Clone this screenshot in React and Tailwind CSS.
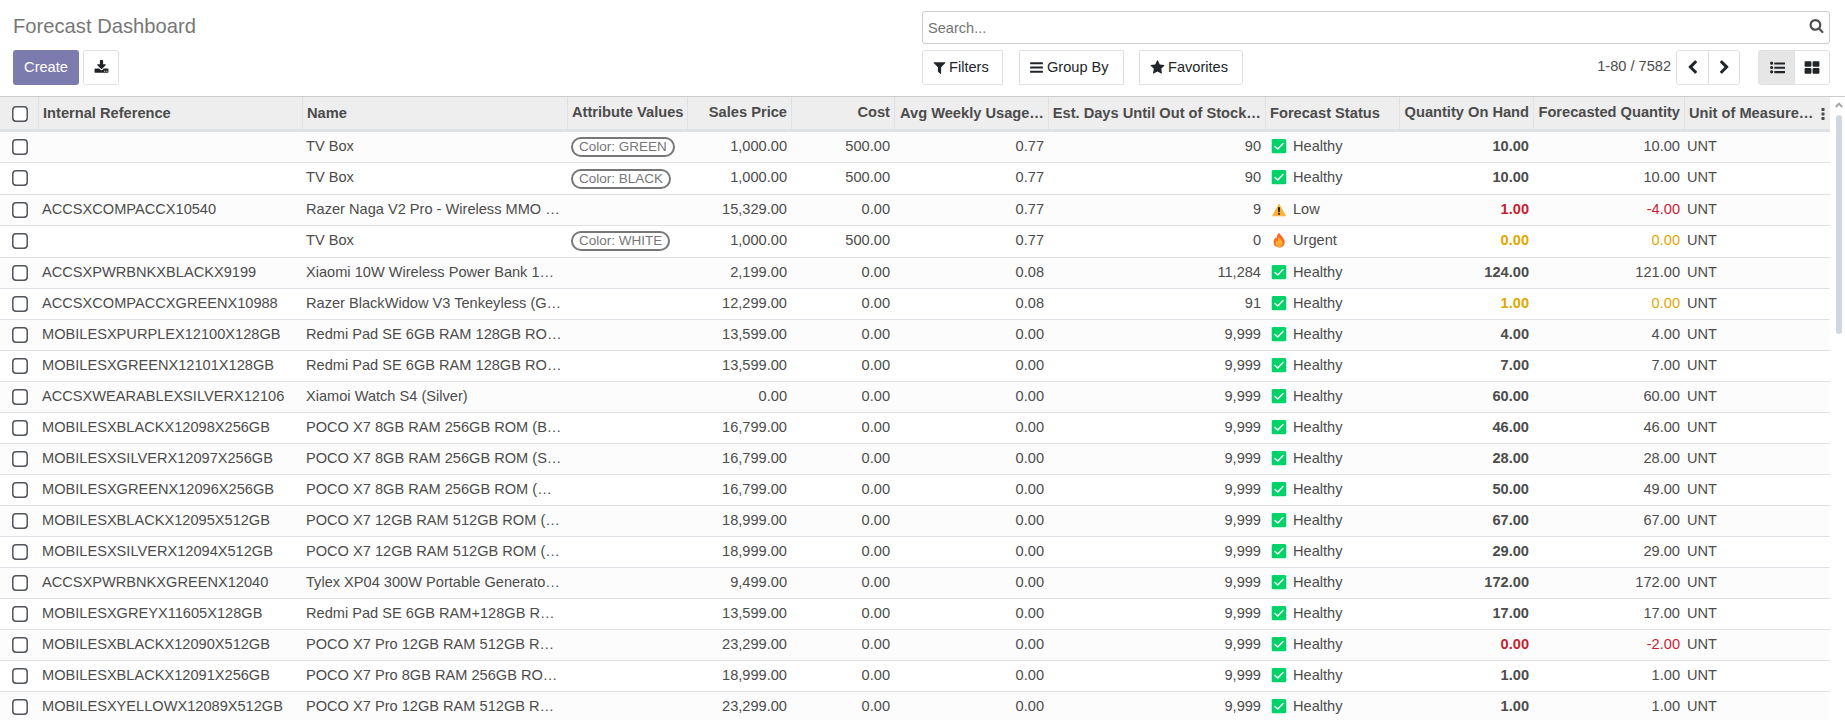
const GRID =
  'grid w-[1830px] grid-cols-[38px_264px_265px_120px_104px_103px_154px_217px_134px_134px_151px_146px]';

const ROWS = [
  ['', 'TV Box', 'GREEN', '1,000.00', '500.00', '0.77', '90', 'Healthy', '10.00', '10.00'],
  ['', 'TV Box', 'BLACK', '1,000.00', '500.00', '0.77', '90', 'Healthy', '10.00', '10.00'],
  ['ACCSXCOMPACCX10540', 'Razer Naga V2 Pro - Wireless MMO …', '', '15,329.00', '0.00', '0.77', '9', 'Low', '1.00', '-4.00', 'danger'],
  ['', 'TV Box', 'WHITE', '1,000.00', '500.00', '0.77', '0', 'Urgent', '0.00', '0.00', 'warning'],
  ['ACCSXPWRBNKXBLACKX9199', 'Xiaomi 10W Wireless Power Bank 1…', '', '2,199.00', '0.00', '0.08', '11,284', 'Healthy', '124.00', '121.00'],
  ['ACCSXCOMPACCXGREENX10988', 'Razer BlackWidow V3 Tenkeyless (G…', '', '12,299.00', '0.00', '0.08', '91', 'Healthy', '1.00', '0.00', 'warning'],
  ['MOBILESXPURPLEX12100X128GB', 'Redmi Pad SE 6GB RAM 128GB RO…', '', '13,599.00', '0.00', '0.00', '9,999', 'Healthy', '4.00', '4.00'],
  ['MOBILESXGREENX12101X128GB', 'Redmi Pad SE 6GB RAM 128GB RO…', '', '13,599.00', '0.00', '0.00', '9,999', 'Healthy', '7.00', '7.00'],
  ['ACCSXWEARABLEXSILVERX12106', 'Xiamoi Watch S4 (Silver)', '', '0.00', '0.00', '0.00', '9,999', 'Healthy', '60.00', '60.00'],
  ['MOBILESXBLACKX12098X256GB', 'POCO X7 8GB RAM 256GB ROM (B…', '', '16,799.00', '0.00', '0.00', '9,999', 'Healthy', '46.00', '46.00'],
  ['MOBILESXSILVERX12097X256GB', 'POCO X7 8GB RAM 256GB ROM (S…', '', '16,799.00', '0.00', '0.00', '9,999', 'Healthy', '28.00', '28.00'],
  ['MOBILESXGREENX12096X256GB', 'POCO X7 8GB RAM 256GB ROM (…', '', '16,799.00', '0.00', '0.00', '9,999', 'Healthy', '50.00', '49.00'],
  ['MOBILESXBLACKX12095X512GB', 'POCO X7 12GB RAM 512GB ROM (…', '', '18,999.00', '0.00', '0.00', '9,999', 'Healthy', '67.00', '67.00'],
  ['MOBILESXSILVERX12094X512GB', 'POCO X7 12GB RAM 512GB ROM (…', '', '18,999.00', '0.00', '0.00', '9,999', 'Healthy', '29.00', '29.00'],
  ['ACCSXPWRBNKXGREENX12040', 'Tylex XP04 300W Portable Generato…', '', '9,499.00', '0.00', '0.00', '9,999', 'Healthy', '172.00', '172.00'],
  ['MOBILESXGREYX11605X128GB', 'Redmi Pad SE 6GB RAM+128GB R…', '', '13,599.00', '0.00', '0.00', '9,999', 'Healthy', '17.00', '17.00'],
  ['MOBILESXBLACKX12090X512GB', 'POCO X7 Pro 12GB RAM 512GB R…', '', '23,299.00', '0.00', '0.00', '9,999', 'Healthy', '0.00', '-2.00', 'danger'],
  ['MOBILESXBLACKX12091X256GB', 'POCO X7 Pro 8GB RAM 256GB RO…', '', '18,999.00', '0.00', '0.00', '9,999', 'Healthy', '1.00', '1.00'],
  ['MOBILESXYELLOWX12089X512GB', 'POCO X7 Pro 12GB RAM 512GB R…', '', '23,299.00', '0.00', '0.00', '9,999', 'Healthy', '1.00', '1.00'],
];

const ICONS = {
  search:
    'M1216 832q0-185-131.5-316.5t-316.5-131.5-316.5 131.5-131.5 316.5 131.5 316.5 316.5 131.5 316.5-131.5 131.5-316.5zm512 832q0 52-38 90t-90 38q-54 0-90-38l-343-342q-179 124-399 124-143 0-273.5-55.5t-225-150-150-225-55.5-273.5 55.5-273.5 150-225 225-150 273.5-55.5 273.5 55.5 225 150 150 225 55.5 273.5q0 220-124 399l343 343q37 37 37 90z',
  star:
    'M1728 647q0 22-26 48l-363 354 86 500q1 7 1 20 0 21-10.5 35.5t-30.5 14.5q-19 0-40-12l-449-236-449 236q-22 12-40 12-21 0-31.5-14.5t-10.5-35.5q0-6 2-20l86-500-364-354q-25-27-25-48 0-37 56-46l502-73 225-455q19-41 49-41t49 41l225 455 502 73q56 9 56 46z',
  filter:
    'M1595 295q17 41-14 70l-493 493v742q0 42-39 59-13 5-25 5-27 0-45-19l-256-256q-19-19-19-45v-486l-493-493q-31-29-14-70 17-39 59-39h1280q42 0 59 39z',
  bars:
    'M192 1280h1408q64 0 64 64v128q0 64-64 64h-1408q-64 0-64-64v-128q0-64 64-64zM192 768h1408q64 0 64 64v128q0 64-64 64h-1408q-64 0-64-64v-128q0-64 64-64zM192 256h1408q64 0 64 64v128q0 64-64 64h-1408q-64 0-64-64v-128q0-64 64-64z',
  download:
    'M1344 1344q0-26-19-45t-45-19-45 19-19 45 19 45 45 19 45-19 19-45zm256 0q0-26-19-45t-45-19-45 19-19 45 19 45 45 19 45-19 19-45zm128-224v320q0 40-28 68t-68 28h-1472q-40 0-68-28t-28-68v-320q0-40 28-68t68-28h465l135 136q58 56 136 56t136-56l136-136h464q40 0 68 28t28 68zm-325-569q17 41-14 70l-448 448q-18 19-45 19t-45-19l-448-448q-31-29-14-70 17-39 59-39h256v-448q0-26 19-45t45-19h256q26 0 45 19t19 45v448h256q42 0 59 39z',
  left:
    'M1427 301l-531 531 531 531q19 19 19 45t-19 45l-166 166q-19 19-45 19t-45-19l-742-742q-19-19-19-45t19-45l742-742q19-19 45-19t45 19l166 166q19 19 19 45t-19 45z',
  right:
    'M1363 877l-742 742q-19 19-45 19t-45-19l-166-166q-19-19-19-45t19-45l531-531-531-531q-19-19-19-45t19-45l166-166q19-19 45-19t45 19l742 742q19 19 19 45t-19 45z',
  list:
    'M192 1216a192 192 0 1 1 0 384a192 192 0 1 1 0-384zM192 704a192 192 0 1 1 0 384a192 192 0 1 1 0-384zM192 192a192 192 0 1 1 0 384a192 192 0 1 1 0-384zM544 1312h1216q32 0 32 32v192q0 32-32 32h-1216q-32 0-32-32v-192q0-32 32-32zM544 800h1216q32 0 32 32v192q0 32-32 32h-1216q-32 0-32-32v-192q0-32 32-32zM544 288h1216q32 0 32 32v192q0 32-32 32h-1216q-32 0-32-32v-192q0-32 32-32z',
  large:
    'M832 1024v384q0 52-38 90t-90 38h-512q-52 0-90-38t-38-90v-384q0-52 38-90t90-38h512q52 0 90 38t38 90zm0-768v384q0 52-38 90t-90 38h-512q-52 0-90-38t-38-90v-384q0-52 38-90t90-38h512q52 0 90 38t38 90zm896 768v384q0 52-38 90t-90 38h-512q-52 0-90-38t-38-90v-384q0-52 38-90t90-38h512q52 0 90 38t38 90zm0-768v384q0 52-38 90t-90 38h-512q-52 0-90-38t-38-90v-384q0-52 38-90t90-38h512q52 0 90 38t38 90z',
};

function Icon({ name, className = 'size-[15px]' }) {
  return (
    <svg viewBox="0 0 1792 1792" fill="currentColor" className={`shrink-0 ${className}`}>
      <path d={ICONS[name]} />
    </svg>
  );
}

function StatusIcon({ status }) {
  if (status === 'Low')
    return (
      <svg viewBox="0 0 16 16" className="size-4 shrink-0">
        <path d="M8 3.200 14.400 14.800H1.600z" fill="#ffb02e" stroke="#ffb02e" strokeLinejoin="round" strokeWidth=".8" />
        <path d="M7.100 6.300h1.800l-.3 4.900H7.400z" fill="#000" />
        <circle cx="8" cy="12.900" r=".95" fill="#000" />
      </svg>
    );
  if (status === 'Urgent')
    return (
      <svg viewBox="0 0 16 16" className="size-4 shrink-0">
        <path d="M8.3.8c.5 2 2.2 2.700 3.500 4.700 1 1.500 1.900 3 1.900 4.900 0 3-2.400 5.100-5.600 5.100s-5.500-2.200-5.500-5.200c0-2.300 1-3.900 2-5.100.3.600.6 1.100 1.100 1.400C5.700 4.300 6.500 2 8.300.8z" fill="#ff6723" />
        <path d="M8.200 5.600c.4 1.600 3.600 3 3.600 6 0 2-1.500 3.500-3.700 3.500s-3.700-1.400-3.700-3.500c0-1.400.7-2.500 1.300-3.100.3.500.5.900.9 1.100.1-1.600.6-3 1.600-4z" fill="#ffb02e" />
      </svg>
    );
  return (
    <svg viewBox="0 0 16 16" className="size-4 shrink-0">
      <rect x=".7" y="1" width="14.500" height="14.300" rx="1.500" fill="#00d26a" />
      <path d="M4 8.400 6.800 11 12 5.500" fill="none" stroke="#fff" strokeWidth="1.400" strokeLinecap="round" />
    </svg>
  );
}

function Checkbox() {
  return (
    <svg viewBox="0 0 16 16" className="block size-4">
      <rect x=".8" y=".8" width="14.400" height="14.400" rx="3.200" fill="#fff" stroke="#50555c" strokeWidth="1.500" />
    </svg>
  );
}

function Th({ children, right, raised }) {
  return (
    <div className={`flex items-center overflow-hidden whitespace-nowrap border-l border-[#dee2e6] px-1 ${right ? 'justify-end' : ''} ${raised ? '' : 'pt-0.5'}`}>
      {children}
    </div>
  );
}

function Num({ children, className = '' }) {
  return <div className={`pr-1 text-right ${className}`}>{children}</div>;
}

const TONES = { danger: 'text-[#c81e32]', warning: 'text-[#e0a800]' };
const btn = 'flex h-[35px] items-center border border-[#dee2e6] bg-white text-[#212529]';

export default function App() {
  return (
    <div className="flex h-[720px] w-[1845px] flex-col overflow-hidden bg-white font-['Liberation_Sans',Arial,sans-serif] text-[14.6px] text-[#4c4c4c]">
      <header className="flex h-24 shrink-0 justify-between pl-[13px] pr-[15px]">
        <div className="flex flex-col">
          <h1 className="mt-[11px] h-[39px] text-[20.200px] leading-[30px] text-[#777]">Forecast Dashboard</h1>
          <div className="flex gap-1">
            <button className="h-[35px] w-[66px] rounded-[3px] bg-[#7c7bad] text-white">Create</button>
            <button className={`${btn} w-9 justify-center rounded-[3px]`}>
              <Icon name="download" />
            </button>
          </div>
        </div>
        <div className="flex w-[908px] flex-col pt-[11px]">
          <div className="flex h-[33px] items-center justify-between rounded-[3px] border border-[#ccc] px-[5px]">
            <span className="pt-0.5 text-[#757575]">Search...</span>
            <Icon name="search" className="mb-1 size-[15px]" />
          </div>
          <div className="mt-1.5 flex">
            <button className={`${btn} w-[81px] gap-0.5 rounded-l-[3px] pl-[9px]`}>
              <Icon name="filter" />
              Filters
            </button>
            <button className={`${btn} ml-4 w-[105px] gap-[3px] pl-[9px]`}>
              <Icon name="bars" />
              Group By
            </button>
            <button className={`${btn} ml-[15px] w-[104px] gap-[3px] rounded-r-[3px] pl-2.5`}>
              <Icon name="star" />
              Favorites
            </button>
            <span className="ml-auto mr-[5px] pt-[5px] leading-[22px]">1-80 / 7582</span>
            <button className={`${btn} w-[33px] justify-center rounded-l-[3px]`}>
              <Icon name="left" />
            </button>
            <button className={`${btn} -ml-px w-8 justify-center rounded-r-[3px]`}>
              <Icon name="right" />
            </button>
            <div className="ml-[18px] flex">
              <button className="flex h-[35px] w-[37px] items-center justify-center rounded-l-[3px] border border-[#dee2e6] bg-[#e6e6e6] pl-0.5 text-[#212529]">
                <Icon name="list" />
              </button>
              <button className={`${btn} -ml-px w-9 justify-center rounded-r-[3px]`}>
                <Icon name="large" className="size-4" />
              </button>
            </div>
          </div>
        </div>
      </header>

      <div className="flex min-h-0 flex-1 border-t border-[#ccc]">
        <main className="w-[1830px]">
          <div className={`${GRID} h-[35px] border-b-[3px] border-[#dee2e6] bg-[#eee] text-[14.650px] font-bold`}>
            <div className="pl-3 pt-[9px]">
              <Checkbox />
            </div>
            <Th>Internal Reference</Th>
            <Th>Name</Th>
            <Th raised>Attribute Values</Th>
            <Th right raised>Sales Price</Th>
            <Th right raised>Cost</Th>
            <Th right>Avg Weekly Usage…</Th>
            <Th right>Est. Days Until Out of Stock…</Th>
            <Th>Forecast Status</Th>
            <Th right raised>Quantity On Hand</Th>
            <Th right raised>Forecasted Quantity</Th>
            <Th>
              Unit of Measure…
              <svg viewBox="0 0 4 12" className="ml-2 h-3 w-1 shrink-0" fill="currentColor">
                <rect x=".5" y="0" width="3" height="3" />
                <rect x=".5" y="4.500" width="3" height="3" />
                <rect x=".5" y="9" width="3" height="3" />
              </svg>
            </Th>
          </div>
          {ROWS.map(([ref, name, color, price, cost, usage, days, status, hand, forecast, tone], i) => (
            <div
              key={i}
              className={`${GRID} border-b border-[#dee2e6] leading-[29px] ${i === 1 || i === 3 ? 'h-8' : 'h-[31px]'} ${i % 2 ? 'bg-white' : 'bg-[#fcfcfc]'}`}
            >
              <div className="pl-3 pt-[7px]">
                <Checkbox />
              </div>
              <div className="whitespace-nowrap pl-1">{ref}</div>
              <div className="whitespace-nowrap pl-1">{name}</div>
              <div className={`flex pl-1 ${i === 1 ? 'pt-1.5' : 'pt-[5px]'}`}>
                {color && (
                  <span className="h-5 whitespace-nowrap rounded-full border-2 border-[#777] bg-white px-1.5 text-[13.500px] leading-4 text-[#777]">
                    Color: {color}
                  </span>
                )}
              </div>
              <Num>{price}</Num>
              <Num>{cost}</Num>
              <Num>{usage}</Num>
              <Num>{days}</Num>
              <div className="flex gap-1.5 pl-1.5">
                <span className="pt-1.5">
                  <StatusIcon status={status} />
                </span>
                {status}
              </div>
              <Num className={`font-bold ${TONES[tone] || ''}`}>{hand}</Num>
              <Num className={TONES[tone] || ''}>{forecast}</Num>
              <div className="pl-[3px]">UNT</div>
            </div>
          ))}
        </main>
        <div className="flex w-[15px] flex-col items-center pl-0.5 pt-[5px]">
          <svg viewBox="0 0 8 6" className="h-1.5 w-2" fill="none" stroke="#a8a8a8" strokeWidth="2">
            <path d="M.8 5 4 1.600 7.200 5" />
          </svg>
          <div className="mt-[7px] h-[219px] w-1.5 rounded-full bg-[#cfd8e1]" />
        </div>
      </div>
    </div>
  );
}
